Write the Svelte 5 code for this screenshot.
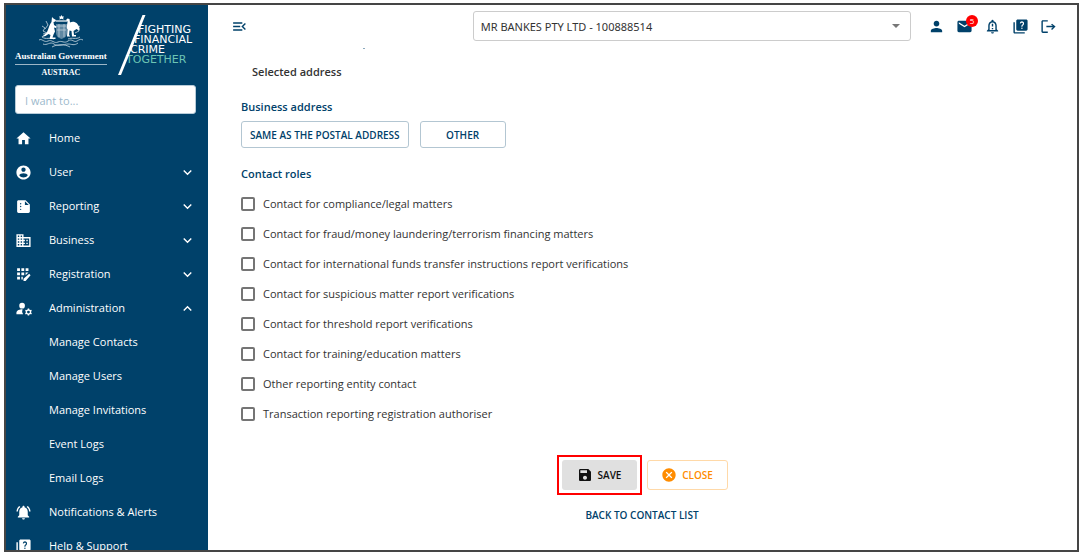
<script>
  const icons = {
    home: 'M10 20v-6h4v6h5v-8h3L12 3 2 12h3v8z',
    user: 'M12 2C6.48 2 2 6.48 2 12s4.480 10 10 10 10-4.480 10-10S17.520 2 12 2zm0 3c1.660 0 3 1.340 3 3s-1.340 3-3 3-3-1.340-3-3 1.340-3 3-3zm0 14.200c-2.500 0-4.710-1.280-6-3.220.030-1.990 4-3.080 6-3.080 1.990 0 5.970 1.090 6 3.080-1.290 1.940-3.500 3.220-6 3.220z',
    report: 'M15 3H5c-1.100 0-1.990.9-1.990 2L3 19c0 1.100.89 2 1.990 2H19c1.100 0 2-.9 2-2V9l-6-6zM8 17c-.55 0-1-.45-1-1s.45-1 1-1 1 .45 1 1-.45 1-1 1zm0-4c-.55 0-1-.45-1-1s.45-1 1-1 1 .45 1 1-.45 1-1 1zm0-4c-.55 0-1-.45-1-1s.45-1 1-1 1 .45 1 1-.45 1-1 1zm6 1V4.500l5.500 5.500H14z',
    business: 'M12 7V3H2v18h20V7H12zM6 19H4v-2h2v2zm0-4H4v-2h2v2zm0-4H4V9h2v2zm0-4H4V5h2v2zm4 12H8v-2h2v2zm0-4H8v-2h2v2zm0-4H8V9h2v2zm0-4H8V5h2v2zm10 12h-8v-2h2v-2h-2v-2h2v-2h-2V9h8v10zm-2-8h-2v2h2v-2zm0 4h-2v2h2v-2z',
    registration: 'M3 3h4v4H3zM9 3h4v4H9zM15 3h4v4h-4zM3 9h4v4H3zM9 9h4v4H9zM3 15h4v4H3zM9 15h2v4H9zM15 9h4l-4 4zM12 18v3h3l7-8-2-2z',
    admin: 'M10 4a4 4 0 1 0 0 8 4 4 0 0 0 0-8zM10.670 13.020C7.500 12.880 2 14.500 2 18v2h9.500a7 7 0 0 1-.83-6.980zM22.750 17c0-.22-.03-.42-.06-.63l1.140-1.010-1-1.730-1.450.49c-.32-.27-.68-.48-1.080-.63L20 12h-2l-.3 1.490c-.4.15-.76.36-1.080.63l-1.450-.49-1 1.730 1.140 1.010c-.03.21-.06.41-.06.63s.03.42.06.63l-1.140 1.010 1 1.730 1.450-.49c.32.27.68.48 1.080.63L18 22h2l.3-1.490c.4-.15.76-.36 1.080-.63l1.450.49 1-1.730-1.140-1.010c.03-.21.06-.41.06-.63zM19 19a2 2 0 1 1 0-4 2 2 0 0 1 0 4z',
    bell: 'M7.580 4.080L6.150 2.650C3.750 4.480 2.170 7.300 2.030 10.500h2c.15-2.650 1.510-4.970 3.550-6.420zm12.390 6.420h2c-.15-3.200-1.730-6.020-4.120-7.850l-1.420 1.430c2.020 1.450 3.390 3.770 3.540 6.420zM18 11c0-3.070-1.640-5.640-4.500-6.320V4c0-.83-.67-1.500-1.500-1.500s-1.500.67-1.500 1.500v.68C7.630 5.360 6 7.920 6 11v5l-2 2v1h16v-1l-2-2v-5zm-6 11c1.110 0 2-.9 2-2h-4c0 1.100.89 2 2 2z',
    help: 'M4 6H2v14c0 1.100.9 2 2 2h14v-2H4V6zm16-4H8c-1.100 0-2 .9-2 2v12c0 1.100.9 2 2 2h12c1.100 0 2-.9 2-2V4c0-1.100-.9-2-2-2zm-6 13.500c-.6 0-1-.4-1-1s.4-1 1-1 1 .4 1 1-.4 1-1 1zm2.500-6c-.7 1-1.700 1.300-1.700 2.700h-1.600c0-2.200 1.300-2.500 2-3.600.5-.8.200-2-1.200-2-.9 0-1.400.7-1.600 1.300l-1.400-.6C11.400 5.700 12.500 4.500 14 4.500c2.800 0 3.700 2.900 2.500 5z',
    person: 'M12 12c2.210 0 4-1.790 4-4s-1.790-4-4-4-4 1.790-4 4 1.790 4 4 4zm0 2c-2.670 0-8 1.340-8 4v2h16v-2c0-2.660-5.330-4-8-4z',
    mail: 'M20 4H4c-1.100 0-2 .9-2 2v12c0 1.100.9 2 2 2h16c1.100 0 2-.9 2-2V6c0-1.100-.9-2-2-2zm0 4l-8 5-8-5V6l8 5 8-5v2z',
    alert: 'M12 22c1.100 0 2-.9 2-2h-4c0 1.100.9 2 2 2zm6-6v-5c0-3.070-1.630-5.640-4.500-6.320V4a1.500 1.500 0 0 0-3 0v.68C7.640 5.360 6 7.920 6 11v5l-2 2v1h16v-1l-2-2zm-2 1H8v-6c0-2.480 1.510-4.500 4-4.500s4 2.020 4 4.500v6zM11 8h2v4h-2zM11 14h2v2h-2z',
    logout: 'M17 8l-1.410 1.410L18.170 11H9v2h9.170l-2.580 2.580L17 17l5-5zM4 5h7V3H4c-1.100 0-2 .9-2 2v14c0 1.100.9 2 2 2h7v-2H4V5z',
    menu: 'M3 18h13v-2H3v2zM3 13h10v-2H3v2zm0-7v2h13V6H3zm18 9.590L17.420 12 21 8.410 19.590 7l-5 5 5 5L21 15.590z',
    down: 'M7.410 8.590L12 13.170l4.590-4.580L18 10l-6 6-6-6z',
    up: 'M7.410 15.410L12 10.830l4.590 4.580L18 14l-6-6-6 6z',
    save: 'M17 3H5c-1.110 0-2 .9-2 2v14c0 1.100.89 2 2 2h14c1.100 0 2-.9 2-2V7l-4-4zm-5 16c-1.660 0-3-1.340-3-3s1.340-3 3-3 3 1.340 3 3-1.340 3-3 3zm3-10H5V5h10v4z',
    cancel: 'M12 2C6.470 2 2 6.470 2 12s4.470 10 10 10 10-4.470 10-10S17.530 2 12 2zm5 13.590L15.590 17 12 13.410 8.410 17 7 15.590 10.590 12 7 8.410 8.410 7 12 10.590 15.590 7 17 8.410 13.410 12 17 15.590z'
  };

  const groups = [
    { label: 'User', icon: 'user' },
    { label: 'Reporting', icon: 'report' },
    { label: 'Business', icon: 'business' },
    { label: 'Registration', icon: 'registration' },
    {
      label: 'Administration',
      icon: 'admin',
      items: ['Manage Contacts', 'Manage Users', 'Manage Invitations', 'Event Logs', 'Email Logs']
    }
  ];

  const roles = [
    'Contact for compliance/legal matters',
    'Contact for fraud/money laundering/terrorism financing matters',
    'Contact for international funds transfer instructions report verifications',
    'Contact for suspicious matter report verifications',
    'Contact for threshold report verifications',
    'Contact for training/education matters',
    'Other reporting entity contact',
    'Transaction reporting registration authoriser'
  ];

  const tools = [
    { label: 'Profile', icon: 'person' },
    { label: 'Messages', icon: 'mail', count: 5 },
    { label: 'Alerts', icon: 'alert' },
    { label: 'Help', icon: 'help' },
    { label: 'Log out', icon: 'logout' }
  ];

  let selected = $state([]);
</script>

{#snippet icon(name)}
  <svg class="icon" viewBox="0 0 24 24" aria-hidden="true"><path d={icons[name]} /></svg>
{/snippet}

<div class="frame">
  <aside class="sidebar">
    <div class="brand">
      <div class="gov">
        <svg class="crest" viewBox="0 0 46 34" aria-hidden="true">
          <path class="shield" d="M18 9h11v8c0 4-2 6-5.500 7-3.500-1-5.500-3-5.500-7z" />
          <path class="twig" d="M1 25c3-2 5 3 9 1s6 3 10 1 6 2 10-1 6 2 9 0 4-2 6-1M5 29c4 2 7-3 11 0s10 0 14 0 6 2 10-1M14 32c5-3 13-3 18 0M4 22c4 3 8 0 12 2M42 22c-4 3-8 0-12 2" />
          <path class="twig" d="M4 11l3 2-2 3 4 2M8 6l2 4-3 4M5 19l4-1M42 11l-3 2 2 3-4 2M38 8l-1 4M19 11h9M19 15h9M21 9v13M26 9v13" />
          <path d="M23.500 0l.8 1.400 1.700.1-.9 1.400.6 1.600-2.200-.7-2.200.7.6-1.600-.9-1.400 1.700-.1z" />
          <path d="M18 5h11v2H18z" opacity="0.6" />
          <path d="M14 2l1.500 1.500L18 5l-.5 1.500-2 .5.5 3 2.500 1.500-.5 1.500-2-.5 1 4-1.500 3-1 3h3v1.500h-6l1-4-2-1-3 2-4 1 5-4c2-3 2-7 5-11z" />
          <path d="M28 5l1.500-1.500 2 .5.5 3.500c2-1 5-1 7 1s3 5 2.500 7l-3-1.500-3 2 .5 4h2v1.500h-4l-.5-5.500-2-.5-.5 5h1v1h-3l.5-7c-1.500-3 0-5 0-8z" />
        </svg>
        <strong class="gov-name">Australian Government</strong>
        <strong class="agency">AUSTRAC</strong>
      </div>
      <div class="motto">
        <svg class="slash" viewBox="0 0 28 60" aria-hidden="true"><path d="M24.500 0h3L3 60H0z" /></svg>
        <span class="m1">FIGHTING</span>
        <span class="m2">FINANCIAL</span>
        <span class="m3">CRIME</span>
        <span class="m4">TOGETHER</span>
      </div>
    </div>

    <input class="search" type="text" placeholder="I want to..." aria-label="I want to" />

    <nav>
      <a class="item" href="#home">{@render icon('home')}<span>Home</span></a>
      {#each groups as group}
        <button class="item" type="button" aria-expanded={!!group.items}>
          {@render icon(group.icon)}
          <span>{group.label}</span>
          {@render icon(group.items ? 'up' : 'down')}
        </button>
        {#each group.items ?? [] as item}
          <a class="item sub" href="#{item}">{item}</a>
        {/each}
      {/each}
      <a class="item" href="#notifications">{@render icon('bell')}<span>Notifications &amp; Alerts</span></a>
      <a class="item" href="#help">{@render icon('help')}<span>Help &amp; Support</span></a>
    </nav>
  </aside>

  <div class="page">
    <header>
      <button class="tool" type="button" aria-label="Collapse menu">{@render icon('menu')}</button>
      <div class="entity">
        <select aria-label="Reporting entity">
          <option>MR BANKES PTY LTD - 100888514</option>
        </select>
      </div>
      <div class="tools">
        {#each tools as tool}
          <button class="tool" type="button" aria-label={tool.label}>
            {@render icon(tool.icon)}
            {#if tool.count}<span class="badge">{tool.count}</span>{/if}
          </button>
        {/each}
      </div>
    </header>

    <main>
      <div class="speck"></div>
      <h3 class="selected">Selected address</h3>

      <h2>Business address</h2>
      <div class="choices">
        <button class="choice" type="button">SAME AS THE POSTAL ADDRESS</button>
        <button class="choice" type="button">OTHER</button>
      </div>

      <fieldset>
        <legend>Contact roles</legend>
        {#each roles as role}
          <label class="role">
            <input type="checkbox" value={role} bind:group={selected} />
            <span>{role}</span>
          </label>
        {/each}
      </fieldset>

      <div class="actions">
        <div class="highlight">
          <button class="save" type="button">{@render icon('save')}SAVE</button>
        </div>
        <button class="close" type="button">{@render icon('cancel')}CLOSE</button>
      </div>
      <a class="back" href="#contacts">BACK TO CONTACT LIST</a>
    </main>
  </div>
</div>

<style>
  :global(body) {
    margin: 0;
    background: #fff;
  }

  :global(#app) {
    box-sizing: border-box;
    height: 100vh;
    padding: 3px 5px 3px 4px;
  }

  .frame {
    box-sizing: border-box;
    display: flex;
    height: 100%;
    overflow: hidden;
    border: 2px solid #454545;
    font-family: "Open Sans", "Noto Sans", sans-serif;
    font-size: 11px;
    line-height: 16px;
    color: #333;
  }

  button,
  input,
  select {
    box-sizing: border-box;
    margin: 0;
    font: inherit;
  }

  button {
    cursor: pointer;
  }

  .icon {
    display: block;
    flex: none;
    width: 17px;
    height: 17px;
    fill: currentColor;
  }

  .sidebar {
    flex: none;
    box-sizing: border-box;
    width: 202px;
    padding: 10px 0 0;
    background: #00416a;
    color: #fff;
  }

  .brand {
    display: flex;
    justify-content: space-between;
    height: 62px;
    padding: 0 14px 0 9px;
  }

  .gov {
    display: flex;
    flex-direction: column;
    align-items: center;
    font-family: "Liberation Serif", serif;
    font-size: 9px;
    line-height: 15px;
  }

  .crest {
    flex: none;
    width: 46px;
    height: 34px;
    fill: #fff;
  }

  .crest .shield {
    fill: #5f88a3;
  }

  .crest .twig {
    fill: none;
    stroke: #b4c8d5;
    stroke-width: 0.9;
  }

  .gov-name {
    border-bottom: 1px solid #9db6c7;
    white-space: nowrap;
  }

  .agency {
    font-size: 8px;
  }

  .motto {
    position: relative;
    display: flex;
    flex-direction: column;
    width: 76px;
    padding-top: 10px;
    font-family: "DejaVu Sans", sans-serif;
    font-size: 11px;
    line-height: 10px;
  }

  .slash {
    position: absolute;
    top: 0;
    left: 0;
    width: 28px;
    height: 60px;
    fill: #fff;
  }

  .m1 {
    padding-left: 20px;
  }

  .m2 {
    padding-left: 16px;
  }

  .m3 {
    padding-left: 12px;
  }

  .m4 {
    padding-left: 8px;
    color: #6cc5b4;
  }

  .search {
    display: block;
    width: 181px;
    height: 29px;
    margin: 8px 0 7px 9px;
    padding: 2px 9px 0;
    border: 1px solid #b8ccd9;
    border-radius: 3px;
    background: #fff;
  }

  .search::placeholder {
    color: #9db9cc;
    opacity: 1;
  }

  .item {
    box-sizing: border-box;
    display: flex;
    align-items: center;
    gap: 17px;
    width: 100%;
    height: 34px;
    padding: 0 12px 0 9px;
    border: 0;
    background: none;
    color: inherit;
    text-align: left;
    text-decoration: none;
  }

  .item span {
    flex: 1;
  }

  .sub {
    padding-left: 43px;
  }

  .page {
    flex: 1;
    min-width: 0;
  }

  header {
    display: flex;
    align-items: center;
    gap: 16px;
    padding: 6px 20px 0 22px;
  }

  .tool {
    position: relative;
    display: grid;
    place-items: center;
    width: 18px;
    height: 18px;
    padding: 0;
    border: 0;
    background: none;
    color: #00416a;
  }

  .entity {
    position: relative;
    width: 53%;
    margin-left: auto;
  }

  .entity::after {
    content: '';
    position: absolute;
    top: 13px;
    right: 11px;
    border: 4px solid transparent;
    border-top-color: #777;
    border-bottom: 0;
    pointer-events: none;
  }

  .entity select {
    display: block;
    appearance: none;
    width: 100%;
    height: 30px;
    padding: 2px 7px 0;
    border: 1px solid #ccc;
    border-radius: 3px;
    background: #fff;
    color: #333;
    font-family: "Noto Sans", sans-serif;
  }

  .tools {
    display: flex;
    gap: 10px;
  }

  .badge {
    position: absolute;
    top: -2px;
    right: -5px;
    width: 12px;
    height: 12px;
    border-radius: 50%;
    background: #f00;
    color: #fff;
    font-size: 8px;
    line-height: 12px;
    text-align: center;
  }

  main {
    display: flex;
    flex-direction: column;
    padding: 7px 34px 0 33px;
  }

  .speck {
    width: 2px;
    height: 1px;
    margin-left: 122px;
    background: #8ba9bd;
  }

  h2,
  h3,
  legend {
    margin: 0;
    padding: 0;
    font-size: 11px;
    font-weight: 600;
    line-height: 16px;
  }

  h2,
  legend {
    color: #00416a;
  }

  .selected {
    margin: 15px 0 19px 11px;
  }

  .choices {
    display: flex;
    gap: 11px;
    margin: 6px 0 18px;
  }

  .choice {
    height: 27px;
    min-width: 86px;
    padding: 0 8px;
    border: 1px solid #b3c6d2;
    border-radius: 3px;
    background: #fff;
    color: #00416a;
    font-size: 10px;
    font-weight: 600;
  }

  fieldset {
    min-width: 0;
    margin: 0;
    padding: 7px 0 0;
    border: 0;
  }

  .role {
    display: flex;
    align-items: center;
    gap: 8px;
    height: 30px;
  }

  .role input {
    appearance: none;
    width: 14px;
    height: 14px;
    border: 2px solid #757575;
    border-radius: 2px;
    background: #fff;
  }

  .role input:checked {
    border-color: #00416a;
    background: #00416a;
  }

  .actions {
    display: flex;
    align-items: center;
    justify-content: center;
    gap: 5px;
    margin-top: 26px;
  }

  .highlight {
    padding: 3px;
    border: 2px solid #f00;
  }

  .save,
  .close {
    display: flex;
    align-items: center;
    justify-content: center;
    gap: 5px;
    height: 30px;
    padding: 0;
    border-radius: 3px;
    font-size: 10px;
    font-weight: 600;
  }

  .save .icon,
  .close .icon {
    width: 16px;
    height: 16px;
  }

  .save {
    width: 75px;
    border: 0;
    background: #e0e0e0;
    color: #111;
  }

  .close {
    width: 81px;
    border: 1px solid #ffd9a8;
    background: #fff;
    color: #ff8c00;
  }

  .back {
    align-self: center;
    margin-top: 12px;
    color: #00416a;
    font-size: 10px;
    font-weight: 600;
    text-decoration: none;
  }
</style>
